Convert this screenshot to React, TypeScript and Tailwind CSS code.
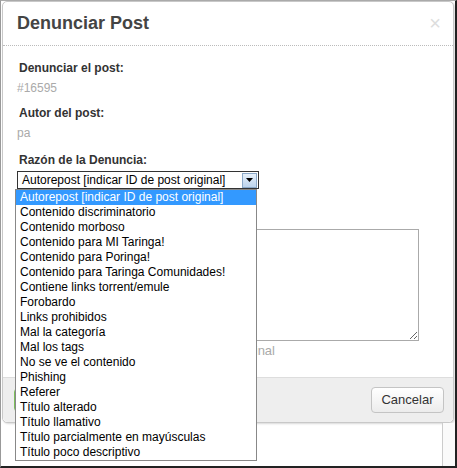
const reasons = [
  'Autorepost [indicar ID de post original]',
  'Contenido discriminatorio',
  'Contenido morboso',
  'Contenido para MI Taringa!',
  'Contenido para Poringa!',
  'Contenido para Taringa Comunidades!',
  'Contiene links torrent/emule',
  'Forobardo',
  'Links prohibidos',
  'Mal la categoría',
  'Mal los tags',
  'No se ve el contenido',
  'Phishing',
  'Referer',
  'Título alterado',
  'Título llamativo',
  'Título parcialmente en mayúsculas',
  'Título poco descriptivo',
];

function Field({ label, value, className }: { label: string; value: string; className?: string }) {
  return (
    <div className={className}>
      <div className="pl-[2px] text-[12px] leading-[15px] font-bold text-[#333]">{label}</div>
      <div className="mt-[5px] text-[12px] leading-[15px] text-[#aaa]">{value}</div>
    </div>
  );
}

export default function App() {
  return (
    <div className="relative w-[457px] h-[468px] overflow-hidden bg-white border-l border-r-2 border-b-2 border-t border-l-[#999] border-r-[#222] border-b-[#222] border-t-[#aaa] font-['Liberation_Sans',Arial,sans-serif]">
      {/* modal */}
      <div className="ml-[1px] w-[452px] rounded-[5px] border border-[#c8c8c8] bg-white shadow-[1px_1px_2px_rgba(0,0,0,0.15)]">
        <div className="flex items-center justify-between pl-[14px] pr-[12px] pt-[10px] pb-[11px] border-b border-dotted border-[#bbb]">
          <h1 className="text-[18px] leading-[22px] font-bold text-[#444]">Denunciar Post</h1>
          <span className="text-[20px] leading-[20px] text-[#ddd]">×</span>
        </div>

        <div className="px-[14px] pt-[15px] pb-[18px]">
          <Field label="Denunciar el post:" value="#16595" />
          <Field label="Autor del post:" value="pa" className="mt-[10px]" />
          <div className="mt-[12px] pl-[2px] text-[12px] leading-[15px] font-bold text-[#333]">Razón de la Denuncia:</div>

          <div className="mt-[3px] flex h-[18px] w-[242px] items-center border border-[#333] bg-white pl-[4px] pr-[1px]">
            <span className="flex-1 text-[12px] leading-[15px] text-black">Autorepost [indicar ID de post original]</span>
            <span className="flex h-[15px] w-[15px] items-center justify-center border border-[#8aa8c8] bg-gradient-to-b from-[#e6f0fa] to-[#bcd3ec]">
              <svg width="7" height="4" viewBox="0 0 7 4">
                <polygon points="0,0 7,0 3.5,4" fill="#000" />
              </svg>
            </span>
          </div>

          <textarea className="mt-[40px] block h-[112px] w-[402px] resize border border-[#aaa] bg-white" />
          <div className="mt-[2px] w-[258px] whitespace-nowrap text-right text-[13px] leading-[16px] text-[#aaa]">
            Si es repost, indicá el ID del post original
          </div>
        </div>

        <div className="flex items-center justify-between rounded-b-[5px] border-t border-[#ddd] bg-[#eee] pl-[11px] pr-[9px] py-[9px]">
          <button className="h-[24px] rounded-[4px] border border-[#7cbf5a] bg-gradient-to-b from-[#9bd87a] to-[#5fae3c] px-[12px] text-[13px] font-bold text-white">
            Denunciar
          </button>
          <button className="h-[26px] w-[73px] rounded-[4px] border border-[#c4c4c4] bg-gradient-to-b from-white to-[#ececec] text-[13px] text-[#333]">
            Cancelar
          </button>
        </div>
      </div>

      {/* page behind the modal */}
      <div className="ml-[441px] h-full w-[13px] border-l border-[#ccc] bg-[#fafafa]" />

      {/* open dropdown list */}
      <ul className="absolute left-[14px] top-[188px] w-[242px] border border-[#888] bg-white">
        {reasons.map((r, i) => (
          <li
            key={r}
            className={`h-[15px] pl-[4px] text-[12px] leading-[15px] whitespace-nowrap ${
              i === 0 ? 'bg-[#3399ff] text-white' : 'text-black'
            }`}
          >
            {r}
          </li>
        ))}
      </ul>
    </div>
  );
}
